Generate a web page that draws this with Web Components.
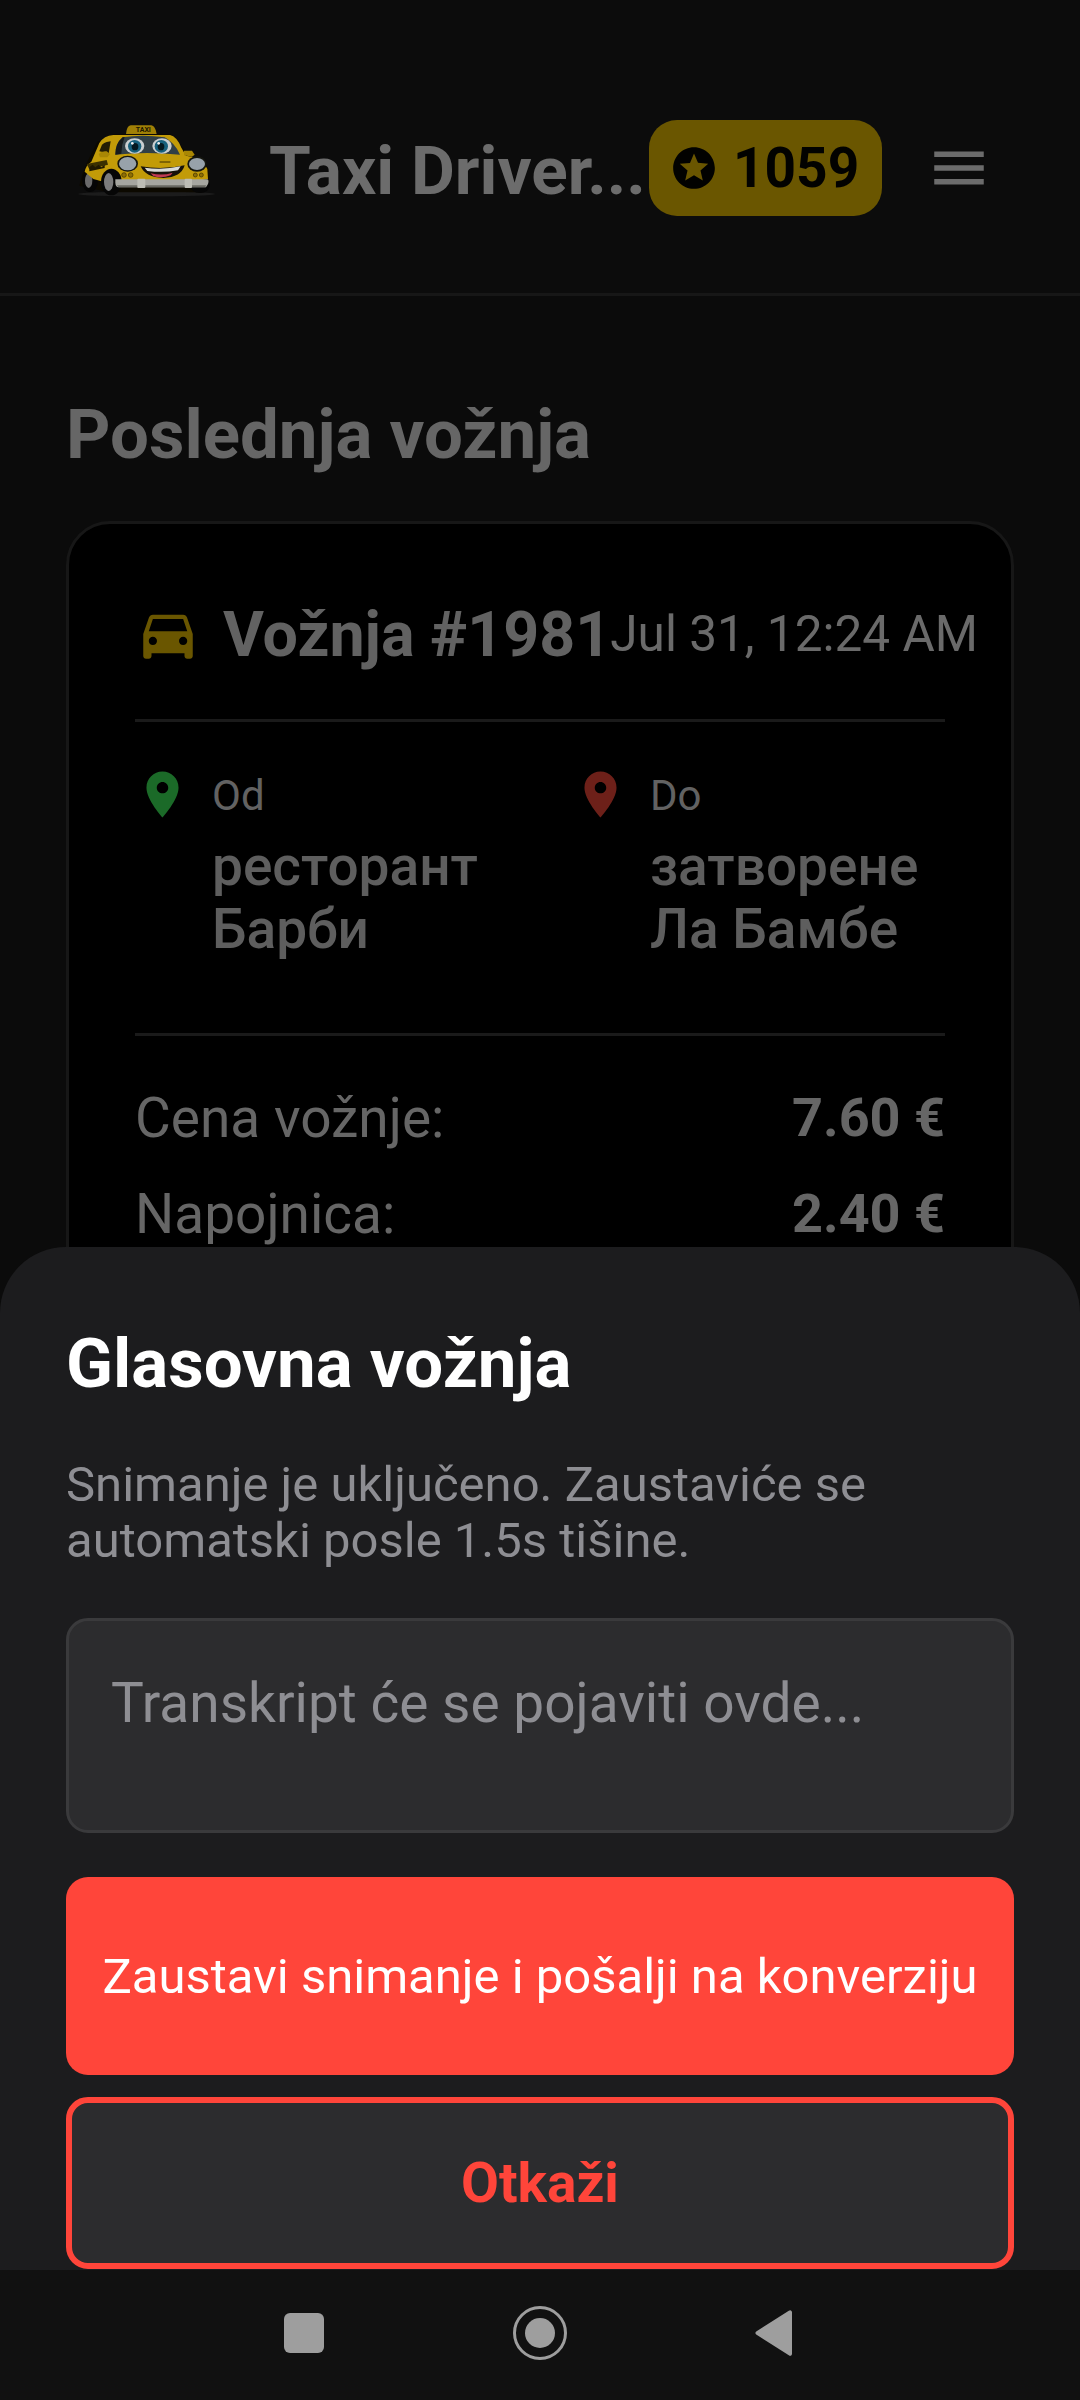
<!DOCTYPE html>
<html lang="sr">
<head>
<meta charset="utf-8">
<title>Taxi Driver</title>
<style>
html, body { margin: 0; background: #0b0b0b; }
body { font-family: Roboto, "Noto Sans", sans-serif; }
</style>
</head>
<body>
<app-shell>
  <app-header></app-header>
  <section-title>Poslednja vožnja</section-title>
  <ride-card>
    <span slot="ride">Vožnja #1981</span>
    <span slot="date">Jul 31, 12:24 AM</span>
    <ride-place slot="places" color="#1b6a28">
      <span slot="label">Od</span>
      ресторант<br>Барби
    </ride-place>
    <ride-place slot="places" color="#6d2019">
      <span slot="label">Do</span>
      затворене<br>Ла Бамбе
    </ride-place>
    <price-row slot="prices"><span slot="label">Cena vožnje:</span>7.60 €</price-row>
    <price-row slot="prices"><span slot="label">Napojnica:</span>2.40 €</price-row>
  </ride-card>
  <voice-sheet slot="sheet">
    <span slot="title">Glasovna vožnja</span>
    <span slot="hint">Snimanje je uključeno. Zaustaviće se automatski posle 1.5s tišine.</span>
    <span slot="transcript">Transkript će se pojaviti ovde...</span>
    <sheet-button slot="actions" kind="primary">Zaustavi snimanje i pošalji na konverziju</sheet-button>
    <sheet-button slot="actions" kind="outline">Otkaži</sheet-button>
  </voice-sheet>
  <nav-bar slot="nav"></nav-bar>
</app-shell>

<script>
"use strict";

/* Every element here is just a template in an open shadow root. */
function register(name, html) {
    const template = document.createElement('template');
    template.innerHTML = html;
    customElements.define(name, class extends HTMLElement {
        constructor() {
            super();
            this.attachShadow({mode: 'open'});
            this.shadowRoot.appendChild(template.content.cloneNode(true));
        }
    });
}

register('app-shell', `
<style>
:host { display: flex; flex-direction: column; height: 2400px; overflow: hidden; }
.screen { flex: 1; position: relative; overflow: hidden; min-height: 0; }
</style>
<div class="screen">
  <slot></slot>
  <slot name="sheet"></slot>
</div>
<slot name="nav"></slot>
`);

register('taxi-logo', `
<style>
:host { display: block; width: 165px; height: 165px; flex: none; }
svg { display: block; }
</style>
<svg width="165" height="165" viewBox="78 -15 495 495">
  <ellipse cx="320" cy="312" rx="205" ry="7" fill="#1c1c1c"/>
  <path d="M128 250l14-35 30-60 50-22h170l40 45 20 22 44 12 12 40v35l-20 20-280 0-90-20z" fill="#0c0900"/>
  <ellipse cx="150" cy="272" rx="24" ry="34" fill="#050505"/>
  <ellipse cx="146" cy="272" rx="11" ry="22" fill="#6a6a6a"/>
  <ellipse cx="480" cy="285" rx="30" ry="24" fill="#060606"/>
  <path d="M258 132q2-24 14-26h62q12 2 16 26z" fill="#a08006"/>
  <text x="310" y="125" text-anchor="middle" font-family="Roboto, sans-serif" font-size="21" font-weight="700" fill="#1d1700">TAXI</text>
  <path d="M134 245q4-20 20-30l24-56q14-22 42-24h170q20 4 34 38l14 24q50 6 64 40l2 30-50 8H190l-30-8z" fill="#c29b08"/>
  <path d="M140 222l60-12 4 14-56 14z" fill="#3b3000"/>
  <path d="M148 232l10-8 8 8 10-8 8 8 10-8v10l-46 10z" fill="#1f1800"/>
  <path d="M178 184l8-20q6-6 14-8l12-2-6 36z" fill="#241d04"/>
  <path d="M226 194q0-34 22-52 58-10 126 0 30 16 46 52-100-10-194 0z" fill="#313f46"/>
  <path d="M226 194q0-34 22-52l6-1q-10 24-10 50z" fill="#161a1b"/>
  <ellipse cx="284" cy="168" rx="29" ry="23" fill="#c9ced0"/>
  <ellipse cx="284" cy="169" rx="20" ry="19" fill="#17607c"/>
  <ellipse cx="285" cy="170" rx="10" ry="11" fill="#04181f"/>
  <circle cx="277" cy="160" r="4" fill="#eee"/>
  <ellipse cx="366" cy="168" rx="29" ry="23" fill="#c9ced0"/>
  <ellipse cx="364" cy="169" rx="20" ry="19" fill="#17607c"/>
  <ellipse cx="363" cy="170" rx="10" ry="11" fill="#04181f"/>
  <circle cx="356" cy="160" r="4" fill="#eee"/>
  <path d="M176 192q8-10 24-8l10 8-8 10h-22z" fill="#a98704"/>
  <path d="M432 182h24l8 12-8 6-24-4z" fill="#a98704"/>
  <ellipse cx="263" cy="221" rx="31" ry="24" fill="#15160f"/>
  <ellipse cx="263" cy="221" rx="26" ry="20" fill="#98a2aa"/>
  <ellipse cx="471" cy="222" rx="29" ry="23" fill="#15160f"/>
  <ellipse cx="471" cy="222" rx="24" ry="18" fill="#98a2aa"/>
  <path d="M360 216h30" stroke="#3a2d00" stroke-width="3" stroke-linecap="round"/>
  <path d="M302 229q66 12 132-3-10 36-64 38-54-2-68-35z" fill="#17120a"/>
  <path d="M314 233q54 8 108-4l-8 12q-44 8-92 2z" fill="#d8dad8"/>
  <path d="M332 250q36 8 66-2l-6 8q-28 10-52 2z" fill="#c03a52"/>
  <g fill="#8f6f05" stroke="#3d3000" stroke-width="2">
    <circle cx="252" cy="255" r="7"/><circle cx="272" cy="255" r="7"/>
    <circle cx="466" cy="255" r="6"/><circle cx="484" cy="255" r="6"/>
  </g>
  <ellipse cx="214" cy="276" rx="31" ry="40" fill="#060606"/>
  <ellipse cx="206" cy="276" rx="14" ry="27" fill="#7c7c7c"/>
  <path d="M226 268h276q6 2 2 14l-6 10H236q-10-2-10-14z" fill="#a6a6a0"/>
  <path d="M230 286h268l-2 6H236z" fill="#686862"/>
  <rect x="292" y="266" width="24" height="28" rx="3" fill="#bdbdb5"/>
  <rect x="434" y="266" width="22" height="28" rx="3" fill="#bdbdb5"/>
</svg>
`);

register('app-header', `
<style>
:host { display: flex; align-items: center; box-sizing: border-box; height: 296px; padding: 85px 66px 43px; border-bottom: 3px solid #171717; background: #0c0c0c; color: #6c6c6c; }
.title { flex: 1; min-width: 0; margin-left: 38px; font-size: 67.5px; font-weight: 700; white-space: nowrap; position: relative; top: 3px; }
.pill { display: flex; align-items: center; gap: 14px; flex: none; width: 233px; height: 96px; box-sizing: border-box; padding-left: 20px; border-radius: 28px; background: #6a5600; color: #020200; font-size: 55px; font-weight: 700; }
.menu { display: flex; justify-content: center; flex: none; width: 110px; margin-left: 22px; }
svg { display: block; fill: currentColor; }
</style>
<taxi-logo></taxi-logo>
<div class="title">Taxi Driver...</div>
<div class="pill">
  <svg width="50" height="50" viewBox="0 0 24 24"><path d="M11.99 2C6.47 2 2 6.48 2 12s4.47 10 9.99 10C17.52 22 22 17.52 22 12S17.52 2 11.99 2zm4.24 16L12 15.45 7.77 18l1.12-4.81-3.73-3.23 4.92-.42L12 5l1.92 4.53 4.92.42-3.73 3.23L16.23 18z"/></svg>
  <span>1059</span>
</div>
<div class="menu">
  <svg width="66" height="66" viewBox="0 0 24 24"><path d="M3 18h18v-2H3v2zm0-5h18v-2H3v2zm0-7v2h18V6H3z"/></svg>
</div>
`);

register('section-title', `
<style>
:host { display: block; padding: 103px 66px 0; height: 122px; color: #666; font-size: 69px; font-weight: 700; line-height: 72px; white-space: nowrap; }
</style>
<slot></slot>
`);

register('ride-card', `
<style>
:host { display: block; margin: 0 66px; padding: 77px 66px 66px; border: 3px solid #171717; border-radius: 44px; background: #000; color: #626262; }
.top { display: flex; align-items: center; height: 66px; padding-bottom: 55px; position: relative; }
.top::after { content: ""; position: absolute; left: 0; right: 0; bottom: 0; height: 3px; background: #1a1a1a; }
.car { display: block; flex: none; fill: #6a5600; margin-right: 22px; }
.ride { font-size: 62.75px; font-weight: 700; white-space: nowrap; }
.date { margin-left: -1px; font-size: 49.5px; white-space: nowrap; color: #6a6a6a; margin-right: -40px; }
.places { display: grid; grid-template-columns: repeat(2, 1fr); gap: 66px; padding: 45px 0 72px; border-bottom: 3px solid #1a1a1a; }
.prices { display: flex; flex-direction: column; gap: 33px; padding-top: 50px; }
</style>
<div class="top">
  <svg class="car" width="66" height="66" viewBox="0 0 24 24"><path d="M18.92 6.01C18.72 5.42 18.16 5 17.5 5h-11c-.66 0-1.21.42-1.42 1.01L3 12v8c0 .55.45 1 1 1h1c.55 0 1-.45 1-1v-1h12v1c0 .55.45 1 1 1h1c.55 0 1-.45 1-1v-8l-2.08-5.99zM6.5 16c-.83 0-1.5-.67-1.5-1.5S5.67 13 6.5 13s1.5.67 1.5 1.5S7.33 16 6.5 16zm11 0c-.83 0-1.5-.67-1.5-1.5s.67-1.5 1.5-1.5 1.5.67 1.5 1.5-.67 1.5-1.5 1.5zM5 11l1.5-4.5h11L19 11H5z"/></svg>
  <span class="ride"><slot name="ride"></slot></span>
  <span class="date"><slot name="date"></slot></span>
</div>
<div class="places"><slot name="places"></slot></div>
<div class="prices"><slot name="prices"></slot></div>
`);

const placeTemplate = document.createElement('template');
placeTemplate.innerHTML = `
<style>
:host { display: flex; gap: 22px; min-width: 0; }
svg { display: block; flex: none; }
.label { font-size: 42px; line-height: 58px; color: #626262; }
.value { margin-top: 10px; font-size: 55px; font-weight: 500; line-height: 63px; color: #5e5e5e; white-space: nowrap; }
</style>
<svg width="55" height="55" viewBox="0 0 24 24"><path d="M12 2C8.13 2 5 5.13 5 9c0 5.25 7 13 7 13s7-7.75 7-13c0-3.87-3.13-7-7-7zm0 9.5c-1.38 0-2.5-1.12-2.5-2.5s1.12-2.5 2.5-2.5 2.5 1.12 2.5 2.5-1.12 2.5-2.5 2.5z"/></svg>
<div>
  <div class="label"><slot name="label"></slot></div>
  <div class="value"><slot></slot></div>
</div>
`;

class RidePlace extends HTMLElement {
    constructor() {
        super();
        this.attachShadow({mode: 'open'});
        this.shadowRoot.appendChild(placeTemplate.content.cloneNode(true));
    }

    connectedCallback() {
        this.shadowRoot.querySelector('svg').style.fill = this.getAttribute('color');
    }
}
customElements.define('ride-place', RidePlace);

register('price-row', `
<style>
:host { display: flex; justify-content: space-between; align-items: center; height: 63px; font-size: 55px; }
.label { color: #666; }
.value { font-size: 54px; font-weight: 700; color: #666; }
</style>
<span class="label"><slot name="label"></slot></span>
<span class="value"><slot></slot></span>
`);

register('voice-sheet', `
<style>
:host { display: block; position: absolute; left: 0; right: 0; bottom: 0; height: 1023px; box-sizing: border-box; padding: 78px 66px 0; background: #1c1c1e; border-radius: 66px 66px 0 0; overflow: hidden; }
.title { font-size: 69px; font-weight: 700; line-height: 78px; color: #fff; }
.hint { margin-top: 54px; font-size: 49px; line-height: 56px; color: #8e8e93; }
.transcript { box-sizing: border-box; height: 215px; margin-top: 49px; padding: 51px 42px 0; border: 3px solid #3a3a3c; border-radius: 22px; background: #2c2c2e; color: #8e8e93; font-size: 55px; line-height: 62px; }
.actions { display: flex; flex-direction: column; gap: 22px; margin-top: 44px; }
</style>
<div class="title"><slot name="title"></slot></div>
<div class="hint"><slot name="hint"></slot></div>
<div class="transcript"><slot name="transcript"></slot></div>
<div class="actions"><slot name="actions"></slot></div>
`);

const buttonTemplate = document.createElement('template');
buttonTemplate.innerHTML = `
<style>
:host { display: flex; align-items: center; justify-content: center; box-sizing: border-box; border-radius: 22px; white-space: nowrap; }
:host([kind="primary"]) { height: 198px; background: #ff453a; color: #fff; font-size: 49px; }
:host([kind="outline"]) { height: 172px; border: 6px solid #ff453a; background: #2c2c2e; color: #ff453a; font-size: 55px; font-weight: 700; }
</style>
<slot></slot>
`;

class SheetButton extends HTMLElement {
    constructor() {
        super();
        this.attachShadow({mode: 'open'});
        this.shadowRoot.appendChild(buttonTemplate.content.cloneNode(true));
    }
}
customElements.define('sheet-button', SheetButton);

register('nav-bar', `
<style>
:host { display: flex; justify-content: center; align-items: center; flex: none; box-sizing: border-box; height: 130px; padding-bottom: 4px; background: #111; }
.cell { display: flex; justify-content: center; width: 236px; }
.back { margin-left: -5px; }
svg { display: block; fill: #9e9e9e; }
</style>
<div class="cell"><svg width="40" height="40" viewBox="0 0 40 40"><rect width="40" height="40" rx="6"/></svg></div>
<div class="cell"><svg width="54" height="54" viewBox="0 0 54 54"><circle cx="27" cy="27" r="25.5" fill="none" stroke="#9e9e9e" stroke-width="3"/><circle cx="27" cy="27" r="15"/></svg></div>
<div class="cell"><svg class="back" width="38" height="46" viewBox="0 0 38 46"><path d="M37 2.5c0-2-1.6-3-3.2-1.8L1.6 21.2c-1.6 1-1.6 2.6 0 3.6l32.2 20.5c1.6 1.2 3.2.2 3.2-1.8z"/></svg></div>
`);
</script>
</body>
</html>
